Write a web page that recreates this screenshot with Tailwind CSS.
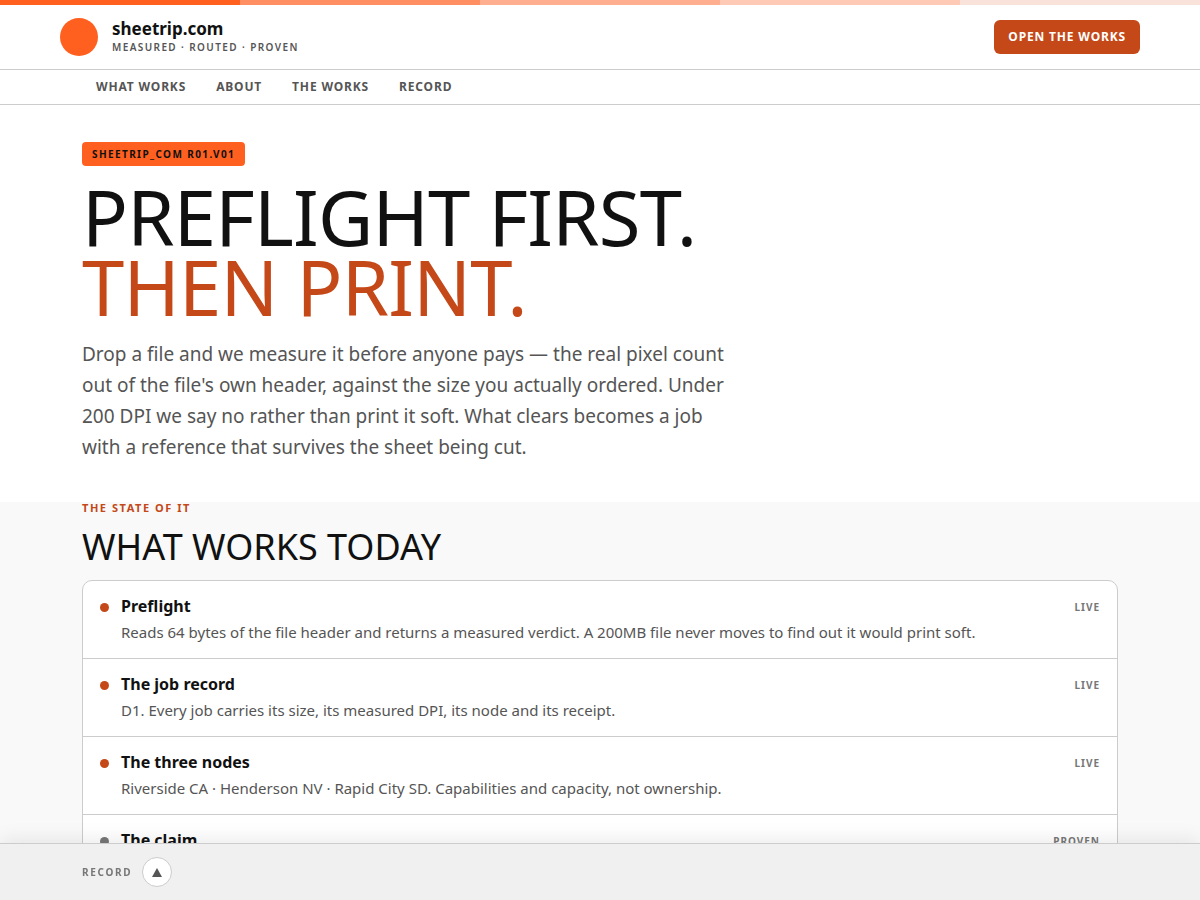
<!DOCTYPE html>
<html lang="en">
<head>
    <meta charset="UTF-8">
    <meta name="viewport" content="width=device-width, initial-scale=1.0">
    <title>sheetrip.com</title>
    <script src="https://cdn.jsdelivr.net/npm/@tailwindcss/browser@4"></script>
</head>
<body class="bg-[#f9f9f9] text-[#111111] font-['Noto_Sans',sans-serif] overflow-x-hidden [scrollbar-width:none]">
    <!-- Ink strip -->
    <div class="grid grid-cols-5 h-[5px]">
        <div class="bg-[#ff5f1f]"></div>
        <div class="bg-[#ff8f62]"></div>
        <div class="bg-[#ffaf8f]"></div>
        <div class="bg-[#ffcab5]"></div>
        <div class="bg-[#f9e2da]"></div>
    </div>

    <header class="bg-white border-b border-[#cccccc]">
        <div class="max-w-[1080px] mx-auto h-16 flex items-center justify-between">
            <a href="#" class="flex items-center gap-3.5">
                <span class="w-[38px] h-[38px] rounded-full bg-[#ff5f1f]"></span>
                <span class="flex flex-col">
                    <span class="text-[17px] leading-5 font-bold">sheetrip.com</span>
                    <span class="text-[10px] leading-4 font-semibold tracking-[0.14em] text-[#555555]">MEASURED · ROUTED · PROVEN</span>
                </span>
            </a>
            <a href="#works" class="bg-[#c44818] text-white text-xs leading-[14px] font-bold tracking-[0.07em] px-3.5 py-2.5 rounded-md">OPEN THE WORKS</a>
        </div>
    </header>

    <nav class="bg-white border-b border-[#cccccc]">
        <div class="max-w-[1036px] mx-auto h-[34px] px-3.5 flex items-center gap-[30px] text-xs font-bold tracking-[0.07em] text-[#555555]">
            <a href="#what">WHAT WORKS</a>
            <a href="#about">ABOUT</a>
            <a href="#works">THE WORKS</a>
            <a href="#record">RECORD</a>
        </div>
    </nav>

    <section class="bg-white pt-[37px] pb-[39px]">
        <div class="max-w-[1036px] mx-auto">
            <span class="inline-block align-top bg-[#ff5f1f] text-[10px] leading-4 font-bold tracking-[0.14em] px-2.5 py-1 rounded">SHEETRIP_COM R01.V01</span>
            <h1 class="mt-4 text-[76px] leading-[70px] tracking-[-0.01em]">PREFLIGHT FIRST.<br><span class="text-[#c44818]">THEN PRINT.</span></h1>
            <p class="mt-[17px] max-w-[660px] text-[19px] leading-[31px] text-[#555555]">Drop a file and we measure it before anyone pays — the real pixel count out of the file's own header, against the size you actually ordered. Under 200 DPI we say no rather than print it soft. What clears becomes a job with a reference that survives the sheet being cut.</p>
        </div>
    </section>

    <section id="what" class="max-w-[1036px] mx-auto pb-24">
        <p class="text-[11px] leading-3 font-bold tracking-[0.14em] text-[#c44818]">THE STATE OF IT</p>
        <h2 class="mt-[13px] text-[36px] leading-10">WHAT WORKS TODAY</h2>
        <ul class="mt-[13px] bg-white border border-[#cccccc] rounded-[10px] divide-y divide-[#cccccc]">
            <li class="flex gap-3 px-[17px] pt-3 pb-[13px]">
                <span class="w-[9px] h-[9px] mt-2.5 rounded-full bg-[#c44818]"></span>
                <div class="flex-1">
                    <h3 class="text-base leading-[26px] font-bold">Preflight</h3>
                    <p class="text-[15px] leading-[26px] text-[#555555]">Reads 64 bytes of the file header and returns a measured verdict. A 200MB file never moves to find out it would print soft.</p>
                </div>
                <span class="text-[10px] leading-7 font-bold tracking-[0.1em] text-[#777777]">LIVE</span>
            </li>
            <li class="flex gap-3 px-[17px] pt-3 pb-[13px]">
                <span class="w-[9px] h-[9px] mt-2.5 rounded-full bg-[#c44818]"></span>
                <div class="flex-1">
                    <h3 class="text-base leading-[26px] font-bold">The job record</h3>
                    <p class="text-[15px] leading-[26px] text-[#555555]">D1. Every job carries its size, its measured DPI, its node and its receipt.</p>
                </div>
                <span class="text-[10px] leading-7 font-bold tracking-[0.1em] text-[#777777]">LIVE</span>
            </li>
            <li class="flex gap-3 px-[17px] pt-3 pb-[13px]">
                <span class="w-[9px] h-[9px] mt-2.5 rounded-full bg-[#c44818]"></span>
                <div class="flex-1">
                    <h3 class="text-base leading-[26px] font-bold">The three nodes</h3>
                    <p class="text-[15px] leading-[26px] text-[#555555]">Riverside CA · Henderson NV · Rapid City SD. Capabilities and capacity, not ownership.</p>
                </div>
                <span class="text-[10px] leading-7 font-bold tracking-[0.1em] text-[#777777]">LIVE</span>
            </li>
            <li class="flex gap-3 px-[17px] pt-3 pb-[13px]">
                <span class="w-[9px] h-[9px] mt-2.5 rounded-full bg-[#777777]"></span>
                <div class="flex-1">
                    <h3 class="text-base leading-[26px] font-bold">The claim</h3>
                </div>
                <span class="text-[10px] leading-7 font-bold tracking-[0.1em] text-[#777777]">PROVEN</span>
            </li>
        </ul>
    </section>

    <!-- Record drawer -->
    <footer id="record" class="fixed inset-x-0 bottom-0 bg-[#f0f0f0] border-t border-[#cccccc] shadow-[0_-4px_18px_rgba(0,0,0,0.08)]">
        <div class="max-w-[1036px] mx-auto h-14 flex items-center gap-2.5">
            <label for="recordToggle" class="text-[10px] font-bold tracking-[0.17em] text-[#777777]">RECORD</label>
            <button id="recordToggle" type="button" class="w-[30px] h-[30px] flex items-center justify-center rounded-full bg-white border border-[#cccccc] text-[#555555]">
                <svg class="w-[10px] h-[9px]" viewBox="0 0 10 9" fill="currentColor"><path d="M5 0L10 9H0Z"/></svg>
            </button>
        </div>
    </footer>
</body>
</html>
